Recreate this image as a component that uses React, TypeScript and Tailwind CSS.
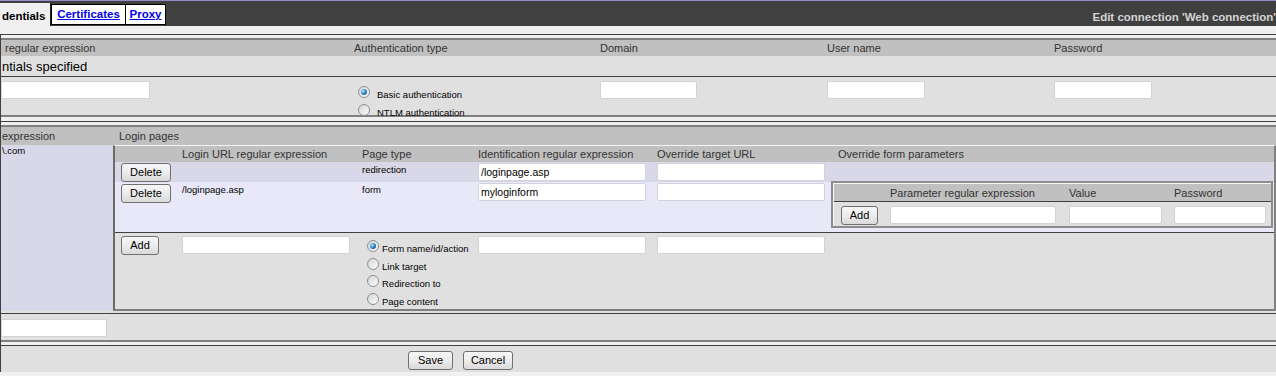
import React from "react";

// small helpers for the old-school form controls
function Btn({ label, className = "" }: { label: string; className?: string }) {
  return (
    <button
      type="button"
      className={`block h-[19px] rounded-[3px] border border-[#707070] bg-linear-to-b from-[#f6f6f6] via-[#ececec] to-[#d9d9d9] text-[11px] leading-none text-black ${className}`}
    >
      {label}
    </button>
  );
}

function Field({ w, value = "", className = "" }: { w: string; value?: string; className?: string }) {
  return (
    <input
      readOnly
      defaultValue={value}
      className={`block h-[18px] ${w} rounded-[2px] border border-[#d2d2da] bg-white px-[2px] text-[10.5px] text-black outline-none ${className}`}
    />
  );
}

function Radio({ label, checked = false, gap = "ml-[3px]" }: { label: string; checked?: boolean; gap?: string }) {
  return (
    <div className="flex h-[17.5px] items-start">
      <span className="flex h-[12px] w-[12px] shrink-0 items-center justify-center rounded-full border border-[#8f8f8f] bg-linear-to-br from-[#d6d6d6] to-[#fcfcfc]">
        {checked && (
          <span className="h-[6px] w-[6px] rounded-full bg-[radial-gradient(circle_at_35%_35%,#a8e4ff,#1c72b8_60%,#0d3c70)]" />
        )}
      </span>
      <span className={`mt-[3px] text-[9.5px] leading-[12px] text-black whitespace-nowrap ${gap}`}>{label}</span>
    </div>
  );
}

const LOGIN_COLS = "grid grid-cols-[63px_180px_116px_179px_176px_1fr]";
const AUTH_COLS = "grid grid-cols-[349px_246px_227px_227px_1fr]";
const PARAM_COLS = "grid grid-cols-[52px_179px_105px_1fr]";

export default function App() {
  return (
    <div className="h-[376px] w-[1276px] overflow-hidden bg-[#f0f0f0] font-['Liberation_Sans',Arial,sans-serif] text-black">
      {/* Title bar with tabs */}
      <div className="flex h-[26px] items-stretch justify-between border-t border-[#9090d0] bg-[#404040]">
        <div className="flex items-end">
          <div className="h-[23px] w-[51px] border-r border-[#202020] bg-[#f0f0f0] pl-[2px] pt-[7px] text-[11.5px] font-bold leading-[12px]">
            dentials
          </div>
          <a className="mb-px flex h-[21px] w-[75px] items-center justify-center border border-black bg-white pt-px text-[11.5px] font-bold text-[#0000ee] underline">
            Certificates
          </a>
          <a className="mb-px -ml-px flex h-[21px] w-[41px] items-center justify-center border border-black bg-white pt-px text-[11.5px] font-bold text-[#0000ee] underline">
            Proxy
          </a>
        </div>
        <div className="mt-[10px] whitespace-nowrap text-[11.5px] font-bold leading-[12px] text-[#d4d4d4]">
          Edit connection 'Web connection'
        </div>
      </div>

      <div className="h-[8px]" />

      <div className="border-l border-[#404040]">
        {/* Credentials section */}
        <div className="border-t border-[#404040] pt-[3px] pb-[4px]">
          <div className="border-y-2 border-[#808080]">
            <div className={`${AUTH_COLS} h-[16px] bg-[#c0c0c0] text-[11px] leading-[16px] text-[#333]`}>
              <div className="pl-[4px]">regular expression</div>
              <div className="pl-[4px]">Authentication type</div>
              <div className="pl-[4px]">Domain</div>
              <div className="pl-[4px]">User name</div>
              <div className="pl-[4px]">Password</div>
            </div>
            <div className="h-[21px] border-b border-[#404040] bg-[#e0e0e0] pl-[1px] text-[13px] leading-[21px]">
              ntials specified
            </div>
            <div className={`${AUTH_COLS} h-[38px] bg-[#e0e0e0]`}>
              <div className="pt-[4px]">
                <Field w="w-[149px]" />
              </div>
              <div className="pl-[8px] pt-[9px]">
                <Radio label="Basic authentication" checked gap="ml-[7px]" />
                <Radio label="NTLM authentication" gap="ml-[7px]" />
              </div>
              <div className="pl-[4px] pt-[4px]">
                <Field w="w-[97px]" />
              </div>
              <div className="pl-[4px] pt-[4px]">
                <Field w="w-[98px]" />
              </div>
              <div className="pl-[4px] pt-[4px]">
                <Field w="w-[98px]" />
              </div>
            </div>
          </div>
        </div>

        {/* Login pages section */}
        <div className="border-t border-[#404040] pt-[3px] pb-[3px]">
          <div className="border-y-2 border-[#808080] bg-[#e0e0e0]">
            <div className="flex h-[18px] bg-[#c0c0c0] text-[11px] leading-[18px] text-[#333]">
              <div className="w-[112px] pl-px">expression</div>
              <div className="pl-[6px]">Login pages</div>
            </div>

            <div className="flex h-[166px]">
              <div className="h-[166px] w-[112px] bg-[#d8d8e8] pl-[1px] text-[9.5px] leading-[11px]">{"\\.com"}</div>

              <div className="flex-1 border-t border-b-2 border-l-2 border-r-2 border-t-[#f4f4f4] border-b-[#808080] border-l-[#6a6a6a] border-r-[#808080]">
                <div className={`${LOGIN_COLS} h-[16px] bg-[#c0c0c0] text-[11px] leading-[16px] text-[#333]`}>
                  <div />
                  <div className="pl-[4px]">Login URL regular expression</div>
                  <div className="pl-[4px]">Page type</div>
                  <div className="pl-[4px]">Identification regular expression</div>
                  <div className="pl-[4px]">Override target URL</div>
                  <div className="pl-[9px]">Override form parameters</div>
                </div>

                <div className={`${LOGIN_COLS} h-[20px] bg-[#d8d8e8]`}>
                  <div className="pl-[6px] pt-px">
                    <Btn label="Delete" className="w-[50px]" />
                  </div>
                  <div />
                  <div className="pl-[4px] pt-[2px] text-[9.5px] leading-[11px]">redirection</div>
                  <div className="pl-[4px] pt-px">
                    <Field w="w-[168px]" value="/loginpage.asp" />
                  </div>
                  <div className="pl-[4px] pt-px">
                    <Field w="w-[168px]" />
                  </div>
                  <div />
                </div>

                <div className={`${LOGIN_COLS} h-[51px] border-b border-[#404040] bg-[#e8e8f8]`}>
                  <div className="pl-[6px] pt-[2px]">
                    <Btn label="Delete" className="w-[50px]" />
                  </div>
                  <div className="pl-[4px] pt-[2px] text-[9.5px] leading-[11px]">/loginpage.asp</div>
                  <div className="pl-[4px] pt-[2px] text-[9.5px] leading-[11px]">form</div>
                  <div className="pl-[4px] pt-px">
                    <Field w="w-[168px]" value="myloginform" />
                  </div>
                  <div className="pl-[4px] pt-px">
                    <Field w="w-[168px]" />
                  </div>
                  <div className="-mt-px pl-[2px]">
                    <div className="w-[442px] border-2 border-b-2 border-[#8c8c8c] bg-[#f6f6f6] pt-px pl-px">
                      <div className={`${PARAM_COLS} h-[18px] border-b border-[#404040] bg-[#c0c0c0] text-[11px] leading-[18px] text-[#333]`}>
                        <div />
                        <div className="pl-[4px]">Parameter regular expression</div>
                        <div className="pl-[4px]">Value</div>
                        <div className="pl-[4px]">Password</div>
                      </div>
                      <div className={`${PARAM_COLS} h-[24px] bg-[#e0e0e0]`}>
                        <div className="pl-[7px] pt-[4px]">
                          <Btn label="Add" className="w-[37px]" />
                        </div>
                        <div className="pl-[4px] pt-[4px]">
                          <Field w="w-[166px]" />
                        </div>
                        <div className="pl-[4px] pt-[4px]">
                          <Field w="w-[93px]" />
                        </div>
                        <div className="pl-[4px] pt-[4px]">
                          <Field w="w-[92px]" />
                        </div>
                      </div>
                    </div>
                  </div>
                </div>

                <div className={`${LOGIN_COLS} h-[75px] bg-[#e0e0e0]`}>
                  <div className="pl-[6px] pt-[3px]">
                    <Btn label="Add" className="w-[38px]" />
                  </div>
                  <div className="pl-[4px] pt-[3px]">
                    <Field w="w-[168px]" />
                  </div>
                  <div className="pl-[9px] pt-[7px]">
                    <Radio label="Form name/id/action" checked />
                    <Radio label="Link target" />
                    <Radio label="Redirection to" />
                    <Radio label="Page content" />
                  </div>
                  <div className="pl-[4px] pt-[3px]">
                    <Field w="w-[168px]" />
                  </div>
                  <div className="pl-[4px] pt-[3px]">
                    <Field w="w-[168px]" />
                  </div>
                  <div />
                </div>
              </div>
            </div>

            <div className="h-[2px]" />
            <div className="h-[27px] border-t border-[#404040] pt-[5px]">
              <Field w="w-[106px]" />
            </div>
          </div>
        </div>

        {/* Save / Cancel */}
        <div className="border-t border-[#404040]">
          <div className="flex h-[26px] gap-[10px] bg-[#e0e0e0] pl-[407px] pt-[5px]">
            <Btn label="Save" className="w-[45px]" />
            <Btn label="Cancel" className="w-[50px]" />
          </div>
        </div>
      </div>
    </div>
  );
}
